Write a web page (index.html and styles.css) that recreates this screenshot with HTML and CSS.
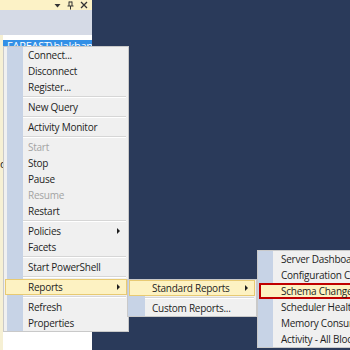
FILE: index.html
```html
<!DOCTYPE html>
<html lang="en">

<head>
    <meta charset="UTF-8">
    <title>Object Explorer - Reports</title>
    <link rel="stylesheet" href="styles.css">
</head>

<body>
    <div class="layout">
        <div class="explorer">
            <div class="title-bar">
                <svg class="tb-icon" width="7" height="7" viewBox="0 0 7 7"><path d="M0.5 2 L6.5 2 L3.5 5.5 Z" fill="#333"/></svg>
                <svg class="tb-icon" width="7" height="9" viewBox="0 0 7 9"><path d="M2 0.5 V5 M5 0.5 V5 M2 1 H5 M0.5 5 H6.5 M3.5 5 V8.5" stroke="#333" stroke-width="1" fill="none"/></svg>
                <svg class="tb-icon" width="8" height="8" viewBox="0 0 8 8"><path d="M1 1 L7 7 M7 1 L1 7" stroke="#333" stroke-width="1.3"/></svg>
            </div>
            <div class="toolbar"></div>
            <div class="tree">
                <div class="node selected">FAREAST\blakhani</div>
                <div class="node stub">d</div>
            </div>
        </div>
        <div class="document"></div>
    </div>

    <!-- context menu over the explorer -->
    <div class="menu main-menu">
        <div class="item">Connect...</div>
        <div class="item">Disconnect</div>
        <div class="item">Register...</div>
        <div class="sep"></div>
        <div class="item">New Query</div>
        <div class="sep"></div>
        <div class="item">Activity Monitor</div>
        <div class="sep"></div>
        <div class="item disabled">Start</div>
        <div class="item">Stop</div>
        <div class="item">Pause</div>
        <div class="item disabled">Resume</div>
        <div class="item">Restart</div>
        <div class="sep"></div>
        <div class="item has-sub">Policies</div>
        <div class="item">Facets</div>
        <div class="sep"></div>
        <div class="item">Start PowerShell</div>
        <div class="sep"></div>
        <div class="item has-sub hover">Reports</div>
        <div class="sep"></div>
        <div class="item">Refresh</div>
        <div class="item">Properties</div>
    </div>

    <div class="menu reports-menu">
        <div class="item has-sub hover">Standard Reports</div>
        <div class="sep"></div>
        <div class="item">Custom Reports...</div>
    </div>

    <div class="menu standard-menu">
        <div class="item">Server Dashboard</div>
        <div class="item">Configuration Changes History</div>
        <div class="item hover marked">Schema Changes History</div>
        <div class="item">Scheduler Health</div>
        <div class="item">Memory Consumption</div>
        <div class="item">Activity - All Blocking Transactions</div>
    </div>
</body>

</html>
```

FILE: styles.css
```css
body {
    margin: 0;
    width: 350px;
    height: 350px;
    overflow: hidden;
    position: relative;
    background: #2a3a5a;
    font-family: "Open Sans", "Noto Sans", sans-serif;
    font-size: 10px;
    letter-spacing: -0.25px;
    color: #1e1e1e;
}

.layout {
    display: flex;
    height: 350px;
}

.explorer {
    width: 92px;
    display: flex;
    flex-direction: column;
    background: #ffffff;
}

.title-bar {
    height: 10px;
    background: #fcf2c6;
    display: flex;
    justify-content: flex-end;
    align-items: center;
    gap: 6px;
    padding-right: 4px;
}

.tb-icon {
    display: block;
}

.toolbar {
    height: 25px;
    background: #d5dae6;
}

.tree {
    flex: 1;
    padding-top: 5px;
    border-left: 3px solid #f6f0d4;
}

.node {
    height: 16px;
    line-height: 16px;
    white-space: nowrap;
    overflow: hidden;
    font-size: 11px;
}

.node.selected {
    background: #3390e6;
    color: #ffffff;
    padding-left: 4px;
    line-height: 11px;
}

.node.stub {
    margin-top: 100px;
    margin-left: -3px;
}

.document {
    flex: 1;
    background: #2a3a5a;
}

/* menus */
.menu {
    position: absolute;
    background-color: #f0f0f0;
    border: 1px solid #c9c9c9;
    white-space: nowrap;
    overflow: hidden;
}

.main-menu {
    left: 3px;
    top: 46px;
    width: 124px;
    background-image: linear-gradient(to right, transparent 3px, #c7d3e6 3px, #c7d3e6 19px, transparent 19px);
}

.reports-menu {
    left: 127px;
    top: 279px;
    width: 128px;
    background-image: linear-gradient(to right, #c7d3e6 17px, transparent 17px);
}

.standard-menu {
    left: 257px;
    top: 250px;
    width: 170px;
    background-image: linear-gradient(to right, #c7d3e6 15px, transparent 15px);
}

.item {
    position: relative;
    height: 16px;
    line-height: 16px;
    margin: 0 1px;
    padding-left: 23px;
}

.standard-menu .item {
    padding-left: 22px;
}

.item.disabled {
    color: #a3a3a3;
}

.item.hover {
    background: #fdf2c2;
    box-shadow: inset 0 0 0 1px #e8ca72;
}

.item.marked {
    box-shadow: inset 0 0 0 2px #c00000;
}

.item.has-sub::after {
    content: "";
    position: absolute;
    right: 7px;
    top: 5px;
    border-left: 3px solid #1e1e1e;
    border-top: 3px solid transparent;
    border-bottom: 3px solid transparent;
}

.sep {
    height: 1px;
    margin: 1px 2px 1px 19px;
    background: #d6d6d6;
    border-bottom: 1px solid #ffffff;
}

.reports-menu .sep {
    margin-left: 17px;
}
```
